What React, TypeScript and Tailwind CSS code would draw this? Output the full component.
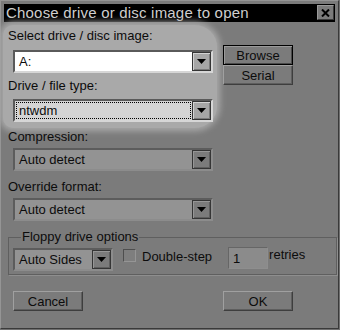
import React from "react";

function Arrow({ dim }: { dim?: boolean }) {
  return (
    <div
      className={
        "flex h-full w-[19px] items-center justify-center border border-[#353535] " +
        (dim
          ? "bg-[#7b7b7b] shadow-[inset_1px_1px_0_#969696,inset_-1px_-1px_0_#5e5e5e]"
          : "bg-[#a6a6a6] shadow-[inset_1px_1px_0_#d2d2d2,inset_-1px_-1px_0_#7a7a7a]")
      }
    >
      <svg width="9" height="5" viewBox="0 0 9 5">
        <polygon points="0,0 9,0 4.5,5" fill="#000" />
      </svg>
    </div>
  );
}

function Combo({
  text,
  field,
  dim,
  focus,
  width = "w-[200px]",
}: {
  text: string;
  field: string;
  dim?: boolean;
  focus?: boolean;
  width?: string;
}) {
  return (
    <div
      className={
        "flex h-[23px] border-2 " +
        width +
        " " +
        field +
        " " +
        (dim
          ? "border-t-[#5c5c5c] border-l-[#5c5c5c] border-r-[#8c8c8c] border-b-[#8c8c8c]"
          : "border-t-[#5a5a5a] border-l-[#5a5a5a] border-r-[#d6d6d6] border-b-[#d6d6d6]")
      }
    >
      <div className="flex min-w-0 flex-1 items-center py-px pl-px pr-px">
        <div
          className={
            "flex h-full flex-1 items-center pl-[2px] text-[13px] leading-none text-[#0c0c0c] " +
            (focus ? "border border-dotted border-black" : "border border-transparent")
          }
        >
          {text}
        </div>
      </div>
      <Arrow dim={dim} />
    </div>
  );
}

function Btn({ label, def }: { label: string; def?: boolean }) {
  return (
    <div
      className={
        "flex h-[20px] w-[70px] items-center justify-center bg-[#7b7b7b] text-[13px] leading-none text-[#0c0c0c] " +
        (def
          ? "border border-black shadow-[inset_1px_1px_0_#9a9a9a,inset_-1px_-1px_0_#4a4a4a]"
          : "border border-t-[#a0a0a0] border-l-[#a0a0a0] border-r-[#3e3e3e] border-b-[#3e3e3e] shadow-[inset_-1px_-1px_0_#5e5e5e]")
      }
    >
      {label}
    </div>
  );
}

export default function App() {
  return (
    <div className="h-[330px] w-[340px] overflow-hidden bg-[#6f6f6f] font-['Liberation_Sans',Arial,sans-serif]">
      <div className="flex h-[329px] w-[339px] flex-col border border-t-[#959595] border-l-[#959595] border-r-[#3a3a3a] border-b-[#3a3a3a] bg-[#7b7b7b] p-[3px]">
        {/* title bar */}
        <div className="flex h-[18px] items-start bg-black">
          <div className="ml-[2px] mt-[1px] text-[15px] leading-[16px] tracking-[0.2px] text-[#cfcfcf]">
            Choose drive or disc image to open
          </div>
          <div className="ml-auto mr-[1px] mt-[1px] flex h-[15px] w-[17px] items-center justify-center border border-t-[#9a9a9a] border-l-[#9a9a9a] border-r-[#3a3a3a] border-b-[#3a3a3a] bg-[#7b7b7b]">
            <svg width="9" height="8" viewBox="0 0 9 8">
              <path d="M1 0.5 L8 7.5 M8 0.5 L1 7.5" stroke="#000" strokeWidth="2" />
            </svg>
          </div>
        </div>

        {/* top row with spotlight */}
        <div className="flex">
          <div className="-ml-[1px] mt-[3px] flex h-[103px] w-[214px] flex-col rounded-tr-[22px] rounded-br-[22px] rounded-tl-[10px] rounded-bl-[10px] bg-[#a9a9a9] pl-[5px] shadow-[0_0_6px_3px_#a9a9a9]">
            <div className="mt-[3px] h-[16px] text-[13px] leading-[16px] text-[#0c0c0c]">
              Select drive / disc image:
            </div>
            <div className="ml-[5px] mt-[6px]">
              <Combo text="A:" field="bg-white" />
            </div>
            <div className="mt-[5px] h-[16px] text-[13px] leading-[16px] text-[#0c0c0c]">
              Drive / file type:
            </div>
            <div className="ml-[5px] mt-[5px]">
              <Combo text="ntwdm" field="bg-[#d4d4d4]" focus />
            </div>
          </div>
          <div className="ml-[6px] mt-[23px] flex flex-col">
            <Btn label="Browse" def />
            <Btn label="Serial" />
          </div>
        </div>

        {/* compression */}
        <div className="ml-[4px] mt-[1px] h-[16px] text-[13px] leading-[16px] text-[#0c0c0c]">
          Compression:
        </div>
        <div className="ml-[9px] mt-[3px]">
          <Combo text="Auto detect" field="bg-[#939393]" dim />
        </div>
        <div className="ml-[4px] mt-[8px] h-[16px] text-[13px] leading-[16px] text-[#0c0c0c]">
          Override format:
        </div>
        <div className="ml-[9px] mt-[3px]">
          <Combo text="Auto detect" field="bg-[#939393]" dim />
        </div>

        {/* floppy group */}
        <fieldset className="ml-[4px] mt-[8px] w-[329px] border border-[#5f5f5f] pb-[3px] pl-[4px] shadow-[1px_1px_0_#8e8e8e]">
          <legend className="ml-[8px] px-[1px] text-[13px] leading-[16px] text-[#0c0c0c]">
            Floppy drive options
          </legend>
          <div className="mt-[3px] flex items-start">
            <Combo text="Auto Sides" field="bg-[#939393]" dim width="w-[100px]" />
            <div className="ml-[10px] mt-[1px] h-[13px] w-[13px] border border-t-[#4e4e4e] border-l-[#4e4e4e] border-r-[#959595] border-b-[#959595] bg-[#7e7e7e]" />
            <div className="ml-[6px] mt-[1px] text-[13px] leading-[15px] text-[#0c0c0c]">Double-step</div>
            <div className="-mt-[1px] ml-[16px] flex h-[22px] w-[40px] items-center border border-t-[#666] border-l-[#666] border-r-[#8e8e8e] border-b-[#8e8e8e] bg-[#8b8b8b] pl-[4px] text-[13px] leading-none text-[#0c0c0c]">
              1
            </div>
            <div className="-mt-[1px] ml-[1px] text-[13px] leading-[15px] text-[#0c0c0c]">retries</div>
          </div>
        </fieldset>

        {/* bottom buttons */}
        <div className="ml-[9px] mt-[16px] flex">
          <Btn label="Cancel" />
          <div className="ml-[140px]">
            <Btn label="OK" />
          </div>
        </div>
      </div>
    </div>
  );
}
